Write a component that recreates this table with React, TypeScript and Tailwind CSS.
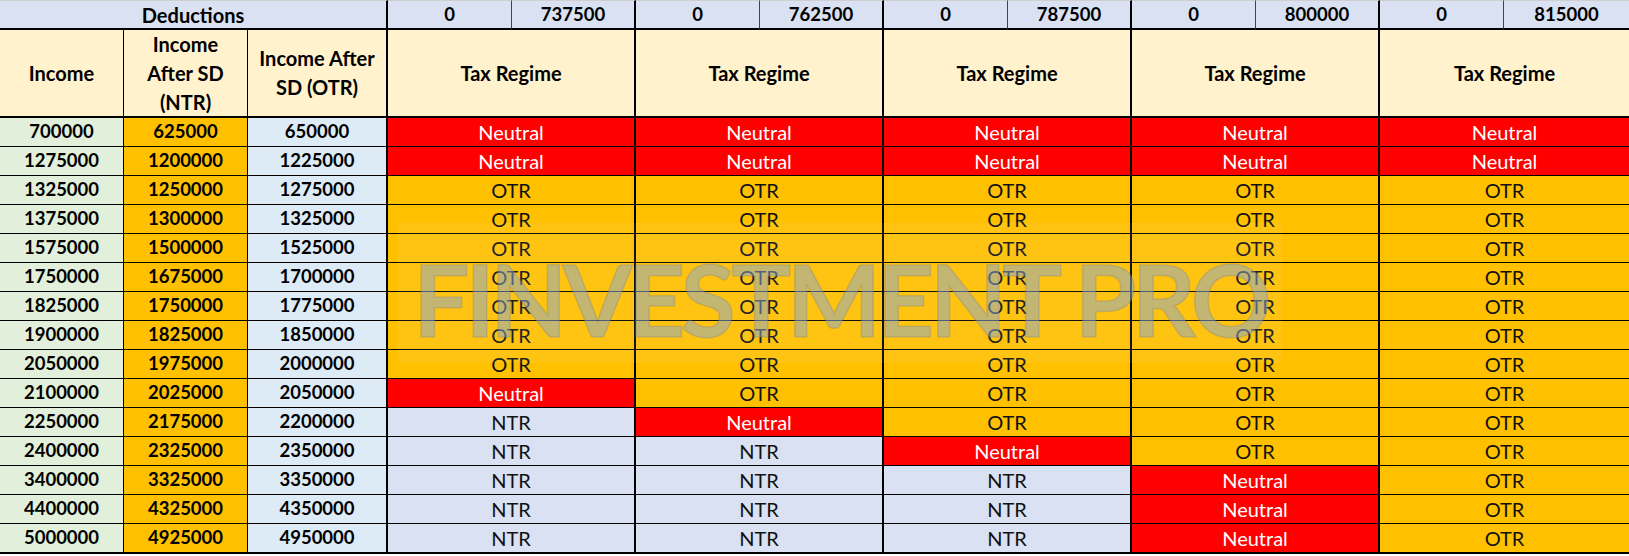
import React from "react";

type R = "N" | "O" | "T";

const incomes = [
  700000, 1275000, 1325000, 1375000, 1575000, 1750000, 1825000, 1900000,
  2050000, 2100000, 2250000, 2400000, 3400000, 4400000, 5000000,
];

const regimes: R[][] = [
  ["N", "N", "N", "N", "N"],
  ["N", "N", "N", "N", "N"],
  ["O", "O", "O", "O", "O"],
  ["O", "O", "O", "O", "O"],
  ["O", "O", "O", "O", "O"],
  ["O", "O", "O", "O", "O"],
  ["O", "O", "O", "O", "O"],
  ["O", "O", "O", "O", "O"],
  ["O", "O", "O", "O", "O"],
  ["N", "O", "O", "O", "O"],
  ["T", "N", "O", "O", "O"],
  ["T", "T", "N", "O", "O"],
  ["T", "T", "T", "N", "O"],
  ["T", "T", "T", "N", "O"],
  ["T", "T", "T", "N", "O"],
];

const deductions = [737500, 762500, 787500, 800000, 815000];

function RegimeCell({ r, last, lastRow }: { r: R; last: boolean; lastRow: boolean }) {
  const bg =
    r === "N"
      ? "bg-[#ff0000] text-white"
      : r === "O"
      ? "bg-[#ffc000] text-[#111]"
      : "bg-[#d9e1f2] text-[#111]";
  const label = r === "N" ? "Neutral" : r === "O" ? "OTR" : "NTR";
  return (
    <div
      className={`col-span-2 flex items-center justify-center border-black text-[20px] ${bg} ${
        last ? "" : "border-r-2"
      } ${lastRow ? "h-[30px] border-b-2" : "h-[29px] border-b"}`}
    >
      {label}
    </div>
  );
}

export default function App() {
  return (
    <div className="relative w-[1629px] h-[556px] bg-white overflow-hidden font-['Lato',sans-serif] text-[18.5px] text-black">
      <div className="grid grid-cols-[124px_124px_140px_124px_124px_124px_124px_124px_124px_124px_124px_124px_125px]">
        {/* Deductions row */}
        <div className="col-span-3 h-[30px] flex items-center justify-center bg-[#d9e1f2] font-bold text-[20px] border-t border-t-[#cfcfcf] border-b-2 border-r-2 border-black">
          Deductions
        </div>
        {deductions.map((d, i) => (
          <React.Fragment key={d}>
            <div className="h-[30px] flex items-center justify-center bg-[#d9e1f2] font-bold border-t border-t-[#cfcfcf] border-b-2 border-b-black border-r border-r-[#444]">
              0
            </div>
            <div
              className={`h-[30px] flex items-center justify-center bg-[#d9e1f2] font-bold border-t border-t-[#cfcfcf] border-b-2 border-b-black ${
                i === 4 ? "" : "border-r-2 border-r-black"
              }`}
            >
              {d}
            </div>
          </React.Fragment>
        ))}

        {/* Header row */}
        <div className="h-[88px] flex items-center justify-center bg-[#fff2cc] font-bold text-[20px] border-b-2 border-r border-black leading-[29px]">
          Income
        </div>
        <div className="h-[88px] flex items-center justify-center text-center bg-[#fff2cc] font-bold text-[20px] border-b-2 border-r border-black leading-[29px]">
          <span>
            Income
            <br />
            After SD
            <br />
            (NTR)
          </span>
        </div>
        <div className="h-[88px] flex items-center justify-center text-center bg-[#fff2cc] font-bold text-[20px] border-b-2 border-r-2 border-black leading-[29px]">
          <span>
            Income After
            <br />
            SD (OTR)
          </span>
        </div>
        {deductions.map((d, i) => (
          <div
            key={"h" + d}
            className={`col-span-2 h-[88px] flex items-center justify-center bg-[#fff2cc] font-bold text-[20px] border-b-2 border-black ${
              i === 4 ? "" : "border-r-2"
            }`}
          >
            Tax Regime
          </div>
        ))}

        {/* Data rows */}
        {incomes.map((inc, ri) => {
          const lastRow = ri === incomes.length - 1;
          const rb = lastRow ? "h-[30px] border-b-2" : "h-[29px] border-b";
          return (
            <React.Fragment key={inc}>
              <div className={`flex items-center justify-center bg-[#e2efda] font-bold border-r border-black ${rb}`}>
                {inc}
              </div>
              <div className={`flex items-center justify-center bg-[#ffc000] font-bold border-r border-black ${rb}`}>
                {inc - 75000}
              </div>
              <div className={`flex items-center justify-center bg-[#ddebf7] font-bold border-r-2 border-black ${rb}`}>
                {inc - 50000}
              </div>
              {regimes[ri].map((r, ci) => (
                <RegimeCell key={ci} r={r} last={ci === 4} lastRow={lastRow} />
              ))}
            </React.Fragment>
          );
        })}
      </div>

      {/* Watermark */}
      <div className="pointer-events-none absolute left-[398px] top-[223px] w-[884px] h-[140px] bg-[rgba(255,255,255,0.07)] flex items-start justify-center">
        <span className="mt-[25px] font-['Lato',sans-serif] font-bold text-[100px] leading-[100px] tracking-[-4.5px] text-[rgba(135,165,210,0.5)] [-webkit-text-stroke:1.5px_rgba(110,120,130,0.25)] whitespace-nowrap">
          FINVESTMENT PRO
        </span>
      </div>
    </div>
  );
}
